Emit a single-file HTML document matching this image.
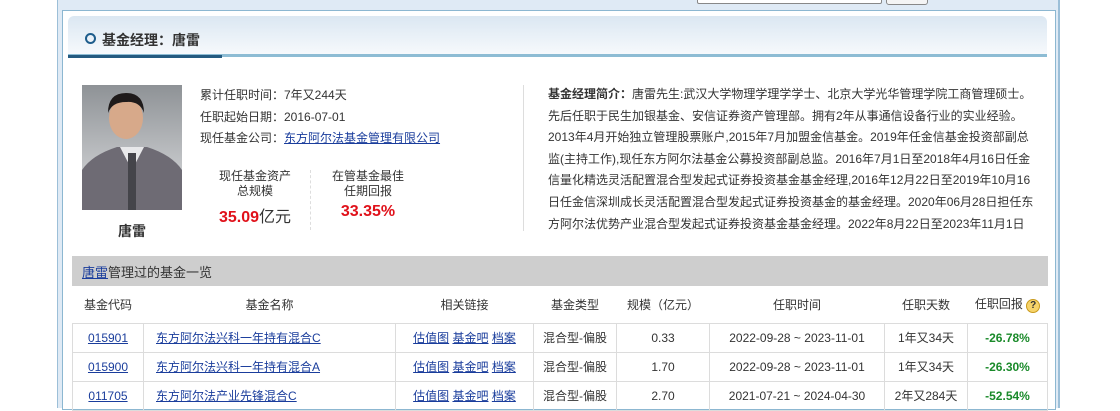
<!DOCTYPE html>
<html><head><meta charset="utf-8"><style>
*{margin:0;padding:0;box-sizing:border-box}
body{width:1120px;height:400px;overflow:hidden;background:#fff;font-family:"Liberation Sans","Noto Sans CJK SC",sans-serif;font-size:12px;color:#333;position:relative}
.a{position:absolute}
a{color:#1a3d9c;text-decoration:underline}
.outer{left:57px;top:-2px;width:1003px;height:410px;background:#dfeaf5;border-left:1px solid #9cbfd8;border-right:2px solid #9cbfd8}
.inner{left:62px;top:10px;width:994px;height:400px;background:#fff;border:1px solid #8cb7d1}
.hdr{left:68px;top:16px;width:979px;height:41px;background:linear-gradient(#dbe7f2,#f6f9fc);border-radius:6px 6px 0 0;border-bottom:3px solid #8dbcd4}
.hdrd{left:68px;top:55px;width:154px;height:3px;background:#245a80}
table{border-collapse:collapse;position:absolute;left:72px;top:286px;width:976px}
td{border:1px solid #dcdcdc;text-align:center;height:29px;font-size:12px}
th{font-weight:normal;height:37px;border-bottom:1px solid #dcdcdc;color:#333}
.g{color:#1a8a2a;font-weight:bold}
</style></head><body>
<div class="a outer"></div>
<div class="a" style="left:697px;top:-4px;width:185px;height:8px;background:#fff;border:1px solid #888;border-radius:2px"></div>
<div class="a" style="left:886px;top:-4px;width:42px;height:9px;background:#f4f4f4;border:1px solid #888;border-radius:3px"></div>
<div class="a inner"></div>
<div class="a hdr"></div><div class="a hdrd"></div>
<div class="a" style="left:85px;top:33px;width:11px;height:11px;border:2px solid #1e5d8c;border-radius:50%"></div>
<div class="a" style="left:102px;top:30px;font-size:14px;font-weight:bold;color:#333">基金经理：唐雷</div>
<svg class="a" style="left:82px;top:85px" width="100" height="125" viewBox="0 0 100 125">
<defs><linearGradient id="bg" x1="0" y1="0" x2="0" y2="1"><stop offset="0" stop-color="#8e9296"/><stop offset="1" stop-color="#dfe0e2"/></linearGradient></defs>
<rect width="100" height="125" fill="url(#bg)"/>
<path d="M0 125 L0 85 Q10 70 35 62 L65 62 Q90 70 100 85 L100 125Z" fill="#6e6b74"/>
<path d="M38 62 L50 85 L62 62Z" fill="#e8e8ea"/>
<rect x="46" y="68" width="8" height="57" fill="#44444a"/>
<ellipse cx="44" cy="33" rx="17" ry="21" fill="#d7a98a"/>
<path d="M26 28 Q26 8 44 8 Q62 8 62 28 Q58 16 44 17 Q30 17 26 28Z" fill="#1e1a1a"/>
</svg>
<div class="a" style="left:82px;top:221px;width:100px;text-align:center;font-size:14px;font-weight:bold">唐雷</div>
<div class="a" style="left:200px;top:85px;line-height:21.5px">累计任职时间：7年又244天<br>任职起始日期：2016-07-01<br>现任基金公司：<a>东方阿尔法基金管理有限公司</a></div>
<div class="a" style="left:205px;top:169px;width:100px;text-align:center;line-height:15px">现任基金资产<br>总规模</div>
<div class="a" style="left:205px;top:203px;width:100px;text-align:center;font-size:16px"><b style="color:#e0111a">35.09</b>亿元</div>
<div class="a" style="left:310px;top:170px;height:60px;border-left:1px dashed #ddd"></div>
<div class="a" style="left:318px;top:169px;width:100px;text-align:center;line-height:15px">在管基金最佳<br>任期回报</div>
<div class="a" style="left:318px;top:203px;width:100px;text-align:center;font-size:16px;font-weight:bold;color:#e0111a">33.35%</div>
<div class="a" style="left:523px;top:85px;height:146px;border-left:1px solid #ddd"></div>
<div class="a" style="left:548px;top:84px;width:487px;line-height:21.6px;height:152px;overflow:hidden"><b>基金经理简介：</b>唐雷先生:武汉大学物理学理学学士、北京大学光华管理学院工商管理硕士。先后任职于民生加银基金、安信证券资产管理部。拥有2年从事通信设备行业的实业经验。2013年4月开始独立管理股票账户,2015年7月加盟金信基金。2019年任金信基金投资部副总监(主持工作),现任东方阿尔法基金公募投资部副总监。2016年7月1日至2018年4月16日任金信量化精选灵活配置混合型发起式证券投资基金基金经理,2016年12月22日至2019年10月16日任金信深圳成长灵活配置混合型发起式证券投资基金的基金经理。2020年06月28日担任东方阿尔法优势产业混合型发起式证券投资基金基金经理。2022年8月22日至2023年11月1日任</div>
<div class="a" style="left:72px;top:256px;width:976px;height:30px;background:#cecece;padding:6px 10px;font-size:13px"><a>唐雷</a>管理过的基金一览</div>
<table>
<tr><th style="width:71px">基金代码</th><th style="width:252px">基金名称</th><th style="width:138px">相关链接</th><th style="width:83px">基金类型</th><th style="width:93px">规模（亿元）</th><th style="width:175px">任职时间</th><th style="width:83px">任职天数</th><th>任职回报 <span style="display:inline-block;width:14px;height:14px;border-radius:50%;background:#f6d36a;border:1px solid #c99a1c;font-size:10px;line-height:12px;font-weight:bold">?</span></th></tr>
<tr><td><a>015901</a></td><td style="text-align:left;padding-left:12px"><a>东方阿尔法兴科一年持有混合C</a></td><td><a>估值图</a> <a>基金吧</a> <a>档案</a></td><td>混合型-偏股</td><td>0.33</td><td>2022-09-28 ~ 2023-11-01</td><td>1年又34天</td><td class="g">-26.78%</td></tr>
<tr><td><a>015900</a></td><td style="text-align:left;padding-left:12px"><a>东方阿尔法兴科一年持有混合A</a></td><td><a>估值图</a> <a>基金吧</a> <a>档案</a></td><td>混合型-偏股</td><td>1.70</td><td>2022-09-28 ~ 2023-11-01</td><td>1年又34天</td><td class="g">-26.30%</td></tr>
<tr><td><a>011705</a></td><td style="text-align:left;padding-left:12px"><a>东方阿尔法产业先锋混合C</a></td><td><a>估值图</a> <a>基金吧</a> <a>档案</a></td><td>混合型-偏股</td><td>2.70</td><td>2021-07-21 ~ 2024-04-30</td><td>2年又284天</td><td class="g">-52.54%</td></tr>
</table>
</body></html>
